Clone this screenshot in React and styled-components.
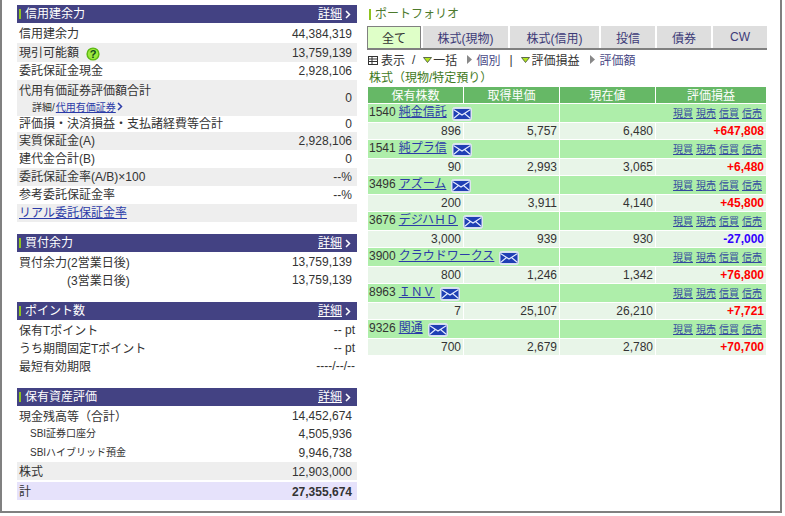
import React from 'react';
import styled, { createGlobalStyle } from 'styled-components';

const Global = createGlobalStyle`
  html, body { margin: 0; padding: 0; background: #fff; }
  body {
    font-family: "Liberation Sans", "Noto Sans CJK JP", sans-serif;
    font-size: 12px;
    color: #333;
  }
`;

const Frame = styled.div`
  box-sizing: border-box;
  width: 782px;
  height: 513px;
  border: 2px solid #808080;
  border-top: 0;
  padding: 5px 14px 0 15px;
  display: flex;
  gap: 10px;
`;
const LeftCol = styled.div`
  width: 340px;
  flex: none;
`;
const RightCol = styled.div`
  width: 400px;
  flex: none;
`;
const Section = styled.section`
  margin-bottom: ${p => p.$after || 14}px;
`;
const Head = styled.div`
  height: 18px;
  background: #434283;
  color: #fff;
  display: flex;
  align-items: center;
  justify-content: space-between;
  padding: 0 6px 0 2px;
`;
const HeadTitle = styled.span`
  display: flex;
  align-items: flex-start;
  height: 18px;
  line-height: 18px;
  white-space: nowrap;
  &::before {
    content: '';
    width: 2px;
    height: 10px;
    background: #8fc31f;
    margin: 4px 4px 0 0;
  }
`;
const HeadLink = styled.a`
  color: #fff;
  display: flex;
  align-items: center;
  gap: 3px;
  height: 18px;
  span { text-decoration: underline; line-height: 16px; margin-top: -1px; }
`;
const Row = styled.div`
  height: ${p => p.$h || 18}px;
  margin-top: ${p => p.$gap || 0}px;
  background: ${p => (p.$tone === 'gray' ? '#eee' : p.$tone === 'purple' ? '#e6e2fb' : 'transparent')};
  display: flex;
  align-items: center;
  justify-content: space-between;
  padding: 0 ${p => (p.$wide ? 2 : 5)}px 0 2px;
  white-space: nowrap;
`;
const Label = styled.span`
  display: flex;
  align-items: center;
  padding-left: ${p => p.$indent || 0}px;
  padding-bottom: ${p => p.$lift || 0}px;
  font-size: ${p => p.$size || 12}px;
`;
const Value = styled.span`
  padding-top: ${p => p.$drop ?? 2}px;
  font-weight: ${p => (p.$bold ? 'bold' : 'normal')};
`;
const TextLink = styled.a`
  color: #2b3ba8;
  text-decoration: underline;
`;
const RowLink = styled(TextLink)`
  padding-bottom: 4px;
`;
const StackedLabel = styled.div`
  display: flex;
  flex-direction: column;
  margin-top: -2px;
`;
const SubLine = styled.div`
  display: flex;
  align-items: center;
  font-size: 10px;
  padding-left: 13px;
  gap: 1px;
  margin-top: -1px;
`;
const Help = styled.svg`
  width: 14px;
  height: 14px;
  margin: 0 0 -6px 7px;
`;

const PortfolioTitle = styled.div`
  height: 21px;
  display: flex;
  align-items: flex-start;
  line-height: 18px;
  color: #4c7a2c;
  font-size: 12px;
  margin-left: 2px;
  &::before {
    content: '';
    width: 2px;
    height: 11px;
    background: #8fc31f;
    margin: 4px 4px 0 0;
  }
`;
const Tabs = styled.div`
  display: flex;
  gap: 2px;
  height: 22px;
  border-bottom: 2px solid #808080;
  width: 400px;
`;
const Tab = styled.div`
  box-sizing: border-box;
  width: ${p => p.$w}px;
  flex: none;
  display: flex;
  align-items: center;
  justify-content: center;
  background: ${p => (p.$active ? '#dfffc8' : '#dedede')};
  color: ${p => (p.$active ? '#333' : '#3d3b78')};
  border: ${p => (p.$active ? '1px solid #808080' : '0')};
  border-bottom: 0;
`;
const Toolbar = styled.div`
  height: 17px;
  margin-top: 1px;
  display: flex;
  align-items: center;
  padding-left: 1px;
  white-space: nowrap;
`;
const ToolText = styled.span`
  margin-left: ${p => p.$ml || 0}px;
  color: ${p => (p.$link ? '#4a4a86' : '#333')};
`;
const Tri = styled.svg`
  margin-left: ${p => p.$ml || 0}px;
  flex: none;
`;
const SubTitle = styled.div`
  height: 18px;
  line-height: 21px;
  color: #3f7a22;
  margin-left: 2px;
`;
const Grid = styled.div`
  display: grid;
  grid-template-columns: 95px 95px 95px 110px;
  gap: 1px;
  margin-left: 1px;
  margin-top: 1px;
`;
const HeadCell = styled.div`
  height: 16px;
  line-height: 18px;
  background: #66b866;
  color: #fff;
  text-align: center;
`;
const NameCell = styled.div`
  grid-column: span 2;
  box-sizing: border-box;
  height: 18px;
  background: #aeeeaa;
  display: flex;
  align-items: center;
  padding: 0 0 2px 1px;
  white-space: nowrap;
`;
const ActionCell = styled.div`
  grid-column: span 2;
  box-sizing: border-box;
  height: 18px;
  background: #aeeeaa;
  display: flex;
  align-items: center;
  justify-content: flex-end;
  gap: 3px;
  padding: 0 4px 2px 0;
  font-size: 10px;
`;
const DataCell = styled.div`
  height: 16px;
  line-height: 17px;
  background: #e8f5e8;
  text-align: right;
  padding-right: 2px;
  font-weight: ${p => (p.$tone ? 'bold' : 'normal')};
  color: ${p => (p.$tone === 'up' ? '#ff0000' : p.$tone === 'down' ? '#3300ff' : '#333')};
`;
const NameLink = styled(TextLink)`
  margin-left: 3px;
  margin-top: -3px;
`;
const ActionLink = styled(TextLink)`
  color: #33489f;
`;
const Mail = styled.svg`
  width: 20px;
  height: 14px;
  margin-left: 5px;
  margin-top: 3px;
  flex: none;
`;

const Chevron = ({ color = '#fff' }) => (
  <svg width="6" height="9" viewBox="0 0 6 9">
    <path d="M1 1l3.5 3.5L1 8" fill="none" stroke={color} strokeWidth="1.5" />
  </svg>
);

const MailIcon = () => (
  <Mail viewBox="0 0 20 14">
    <rect x="0.5" y="0.5" width="19" height="13" rx="2" fill="#d6e0ee" stroke="#dfe6f0" />
    <rect x="1.5" y="2" width="17" height="10" fill="#1f3fb4" />
    <path d="M1.5 2.5L10 8l8.5-5.5M1.5 11.5l6-5M18.5 11.5l-6-5" fill="none" stroke="#e6ecff" strokeWidth="1.1" />
  </Mail>
);

const DownTri = ({ ml }) => (
  <Tri $ml={ml} width="9" height="6" viewBox="0 0 9 6">
    <path d="M.5.5h8L4.5 5.5z" fill="#b4e61e" stroke="#3c4a3c" strokeWidth=".8" />
  </Tri>
);

const RightTri = ({ ml }) => (
  <Tri $ml={ml} width="5" height="9" viewBox="0 0 5 9">
    <path d="M0 0l5 4.5L0 9z" fill="#888" />
  </Tri>
);

const Header = ({ title }) => (
  <Head>
    <HeadTitle>{title}</HeadTitle>
    <HeadLink>
      <span>詳細</span>
      <Chevron />
    </HeadLink>
  </Head>
);

const stocks = [
  { code: '1540', name: '純金信託', qty: '896', cost: '5,757', now: '6,480', pl: '+647,808' },
  { code: '1541', name: '純プラ信', qty: '90', cost: '2,993', now: '3,065', pl: '+6,480' },
  { code: '3496', name: 'アズーム', qty: '200', cost: '3,911', now: '4,140', pl: '+45,800' },
  { code: '3676', name: 'デジハＨＤ', qty: '3,000', cost: '939', now: '930', pl: '-27,000' },
  { code: '3900', name: 'クラウドワークス', qty: '800', cost: '1,246', now: '1,342', pl: '+76,800' },
  { code: '8963', name: 'ＩＮＶ', qty: '7', cost: '25,107', now: '26,210', pl: '+7,721' },
  { code: '9326', name: '関通', qty: '700', cost: '2,679', now: '2,780', pl: '+70,700' },
];

const tabs = [
  ['全て', 54],
  ['株式(現物)', 85],
  ['株式(信用)', 89],
  ['投信', 54],
  ['債券', 54],
  ['CW', 54],
];

export default function App() {
  return (
    <>
      <Global />
      <Frame>
        <LeftCol>
          <Section $after={12}>
            <Header title="信用建余力" />
            <Row $h={20}><Label $lift={2}>信用建余力</Label><Value>44,384,319</Value></Row>
            <Row $h={19} $tone="gray">
              <Label $lift={3}>
                現引可能額
                <Help viewBox="0 0 14 14">
                  <circle cx="7" cy="7" r="6.6" fill="#5cb814" />
                  <circle cx="7" cy="7" r="5.2" fill="#9be83c" />
                  <text x="7" y="11" textAnchor="middle" fontSize="11" fontWeight="bold" fill="#0f4a1c" fontFamily="Liberation Sans">?</text>
                </Help>
              </Label>
              <Value $drop={0}>13,759,139</Value>
            </Row>
            <Row><Label $lift={4}>委託保証金現金</Label><Value $drop={0}>2,928,106</Value></Row>
            <Row $h={36} $tone="gray">
              <StackedLabel>
                <Label $lift={2}>代用有価証券評価額合計</Label>
                <SubLine>
                  詳細/ <TextLink>代用有価証券</TextLink>
                  <Chevron color="#2b3ba8" />
                </SubLine>
              </StackedLabel>
              <Value $drop={0}>0</Value>
            </Row>
            <Row $h={16}><Label $lift={4}>評価損・決済損益・支払諸経費等合計</Label><Value $drop={0}>0</Value></Row>
            <Row $tone="gray"><Label $lift={4}>実質保証金(A)</Label><Value $drop={0}>2,928,106</Value></Row>
            <Row><Label $lift={4}>建代金合計(B)</Label><Value $drop={0}>0</Value></Row>
            <Row $tone="gray"><Label $lift={4}>委託保証金率(A/B)×100</Label><Value $drop={0}>--%</Value></Row>
            <Row><Label $lift={4}>参考委託保証金率</Label><Value $drop={0}>--%</Value></Row>
            <Row $tone="gray"><RowLink>リアル委託保証金率</RowLink></Row>
          </Section>

          <Section>
            <Header title="買付余力" />
            <Row><Label>買付余力(2営業日後)</Label><Value>13,759,139</Value></Row>
            <Row><Label $indent={48}>(3営業日後)</Label><Value>13,759,139</Value></Row>
          </Section>

          <Section>
            <Header title="ポイント数" />
            <Row $wide><Label>保有Tポイント</Label><Value>-- pt</Value></Row>
            <Row $wide><Label>うち期間固定Tポイント</Label><Value>-- pt</Value></Row>
            <Row $wide><Label>最短有効期限</Label><Value>----/--/--</Value></Row>
          </Section>

          <Section>
            <Header title="保有資産評価" />
            <Row><Label>現金残高等（合計）</Label><Value>14,452,674</Value></Row>
            <Row><Label $indent={11} $size={10} $lift={2}>SBI証券口座分</Label><Value>4,505,936</Value></Row>
            <Row $h={20}><Label $indent={11} $size={10} $lift={2}>SBIハイブリッド預金</Label><Value>9,946,738</Value></Row>
            <Row $tone="gray"><Label $lift={2}>株式</Label><Value>12,903,000</Value></Row>
            <Row $tone="purple" $gap={2}><Label $lift={2}>計</Label><Value $bold>27,355,674</Value></Row>
          </Section>
        </LeftCol>

        <RightCol>
          <PortfolioTitle>ポートフォリオ</PortfolioTitle>
          <Tabs>
            {tabs.map(([label, w], i) => (
              <Tab key={label} $w={w} $active={i === 0}>{label}</Tab>
            ))}
          </Tabs>
          <Toolbar>
            <svg width="10" height="10" viewBox="0 0 10 10">
              <path d="M.5 1.5h9M.5 4h9M.5 6.5h9M.5 9.5h9M.5 1v9M9.5 1v9M4 1.5v8" fill="none" stroke="#333" />
            </svg>
            <ToolText $ml={3}>表示</ToolText>
            <ToolText $ml={7}>/</ToolText>
            <DownTri ml={8} />
            <ToolText $ml={1}>一括</ToolText>
            <RightTri ml={10} />
            <ToolText $ml={4} $link>個別</ToolText>
            <ToolText $ml={9}>|</ToolText>
            <DownTri ml={8} />
            <ToolText $ml={2}>評価損益</ToolText>
            <RightTri ml={10} />
            <ToolText $ml={5} $link>評価額</ToolText>
          </Toolbar>
          <SubTitle>株式（現物/特定預り）</SubTitle>
          <Grid>
            {['保有株数', '取得単価', '現在値', '評価損益'].map(h => (
              <HeadCell key={h}>{h}</HeadCell>
            ))}
            {stocks.map(s => (
              <React.Fragment key={s.code}>
                <NameCell>
                  {s.code}
                  <NameLink>{s.name}</NameLink>
                  <MailIcon />
                </NameCell>
                <ActionCell>
                  <ActionLink>現買</ActionLink>
                  <ActionLink>現売</ActionLink>
                  <ActionLink>信買</ActionLink>
                  <ActionLink>信売</ActionLink>
                </ActionCell>
                <DataCell>{s.qty}</DataCell>
                <DataCell>{s.cost}</DataCell>
                <DataCell>{s.now}</DataCell>
                <DataCell $tone={s.pl[0] === '+' ? 'up' : 'down'}>{s.pl}</DataCell>
              </React.Fragment>
            ))}
          </Grid>
        </RightCol>
      </Frame>
    </>
  );
}
